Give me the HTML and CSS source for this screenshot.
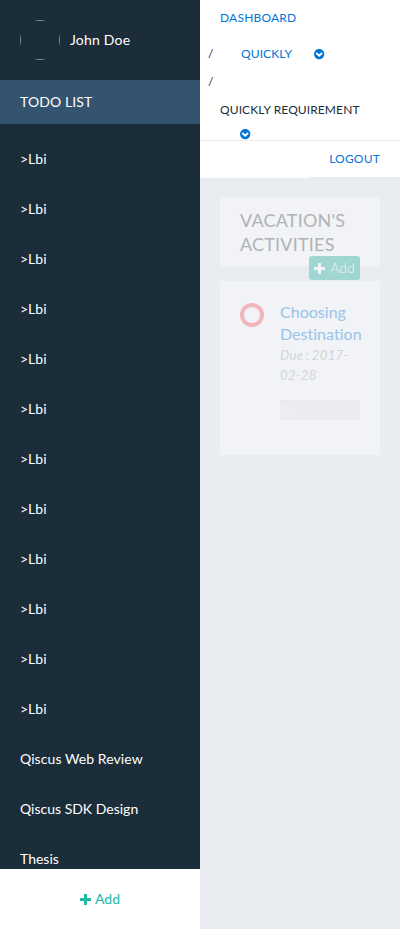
FILE: index.html
```html
<!DOCTYPE html>
<html lang="en">
<head>
<meta charset="utf-8">
<title>Quickly</title>
<link rel="stylesheet" href="styles.css">
</head>
<body>
<svg width="0" height="0" class="defs">
  <symbol id="plus" viewBox="0 0 11 11"><path d="M4 0h3v4h4v3H7v4H4V7H0V4h4z"/></symbol>
  <symbol id="chevron" viewBox="0 0 11 11"><circle cx="5.2" cy="5.1" r="5.2"/><path d="M2.3 4 5.2 6.8 8.1 4" fill="none" stroke="#fff" stroke-width="1.9"/></symbol>
</svg>
<div class="app">
  <aside class="sidebar">
    <div class="user"><div class="avatar"></div><span>John Doe</span></div>
    <div class="heading">TODO LIST</div>
    <ul class="list">
      <li>&gt;Lbi</li><li>&gt;Lbi</li><li>&gt;Lbi</li><li>&gt;Lbi</li>
      <li>&gt;Lbi</li><li>&gt;Lbi</li><li>&gt;Lbi</li><li>&gt;Lbi</li>
      <li>&gt;Lbi</li><li>&gt;Lbi</li><li>&gt;Lbi</li><li>&gt;Lbi</li>
      <li class="wide">Qiscus Web Review</li><li>Qiscus SDK Design</li><li>Thesis</li>
    </ul>
    <div class="add"><svg class="plus"><use href="#plus"/></svg><span>Add</span></div>
  </aside>
  <main class="main">
    <nav class="crumbs">
      <div class="crumb first"><a>DASHBOARD</a></div>
      <div class="crumb second"><span class="slash">/</span><a>QUICKLY</a><svg class="chevron"><use href="#chevron"/></svg></div>
      <div class="crumb third"><span class="slash">/</span></div>
      <div class="crumb current">QUICKLY REQUIREMENT</div>
      <div class="crumb last"><svg class="chevron"><use href="#chevron"/></svg></div>
    </nav>
    <div class="logout"><a>LOGOUT</a></div>
    <div class="content">
      <section class="card title">
        <h1>VACATION'S ACTIVITIES</h1>
        <div class="button"><svg class="plus"><use href="#plus"/></svg><span>Add</span></div>
      </section>
      <section class="card task">
        <div class="ring"></div>
        <div class="details">
          <h2>Choosing Destination</h2>
          <p class="due">Due : 2017-02-28</p>
          <div class="progress">0%</div>
        </div>
      </section>
    </div>
  </main>
</div>
</body>
</html>
```
FILE: styles.css
```css
* { box-sizing: border-box; }
body { margin: 0; font: 14px/20px Lato, sans-serif; background: #e9edf2; }
.defs { display: block; }
.app { display: flex; height: 929px; overflow: hidden; }
.sidebar { width: 200px; display: flex; flex-direction: column; background: #1c2d3a; color: #fff; }
.user { height: 80px; flex: none; display: flex; align-items: center; gap: 10px; padding-left: 20px; letter-spacing: .2px; }
.avatar {
  width: 40px;
  height: 40px;
  background:
    linear-gradient(90deg, transparent, #858d94 40% 60%, transparent) center top / 12px 1px,
    linear-gradient(90deg, transparent, #858d94 40% 60%, transparent) center bottom / 12px 1px,
    linear-gradient(transparent, #858d94 40% 60%, transparent) left center / 1px 12px,
    linear-gradient(transparent, #858d94 40% 60%, transparent) right center / 1px 12px;
  background-repeat: no-repeat;
}
.heading { height: 44px; flex: none; padding: 12px 20px; background: #34536e; letter-spacing: .1px; }
.list { flex: 1; min-height: 0; overflow: hidden; margin: 0; padding: 10px 0 0; list-style: none; }
.list li { height: 50px; padding: 15px 20px; }
.list .wide { letter-spacing: .08px; }
.add { height: 60px; flex: none; display: flex; align-items: center; justify-content: center; gap: 4px; background: #fff; color: #20b9a8; }
.plus { width: 11px; height: 11px; fill: currentColor; }
.chevron { width: 11px; height: 11px; fill: #0275d8; }
.main { width: 200px; }
.crumbs { height: 141px; background: #fff; border-bottom: 1px solid #eceeef; font-size: 12px; letter-spacing: .1px; color: #1c2d3a; }
.crumb { height: 28px; display: flex; align-items: center; }
.first { height: 36px; padding-left: 20px; letter-spacing: .2px; }
.second { height: 36px; }
.third { height: 20px; }
.slash { width: 41px; padding-left: 8px; }
.second .chevron { margin-left: 22px; }
.current { height: 36px; padding-left: 20px; }
.last { height: 12px; padding-left: 40px; }
a { color: #0275d8; }
.logout { height: 37px; padding: 8px 20px; text-align: right; font-size: 12px; letter-spacing: .2px; background: linear-gradient(#eceeef, #eceeef) right bottom / 91px 1px no-repeat #fff; }
.content { padding: 20px; }
.card { background: #f1f3f6; }
.title { position: relative; height: 68px; padding: 10px 20px; margin-bottom: 15px; }
h1 { margin: 0; font-size: 18px; line-height: 24px; font-weight: 400; letter-spacing: .2px; color: #b0b2b4; }
.button { position: absolute; right: 20px; bottom: -14px; width: 51px; height: 24px; display: flex; align-items: center; justify-content: center; gap: 5px; border-radius: 3px; background: #a0d6d1; color: #f1f3f6; font-weight: 300; }
.task { height: 174px; display: flex; gap: 16px; padding: 20px; }
.ring { width: 24px; height: 24px; flex: none; margin-top: 2px; border: 4px solid #f1b5ba; border-radius: 50%; }
.details { width: 80px; }
h2 { margin: 0; font-size: 16px; line-height: 22px; font-weight: 400; letter-spacing: .02px; font-variant-ligatures: none; color: #98c4ea; }
.due { margin: 0 0 15px; font-size: 13px; font-style: italic; letter-spacing: .4px; word-spacing: -1.1px; color: #d3d5d7; }
.progress { height: 20px; background: #ebecef; color: #f1f3f6; font-size: 12px; }
```
